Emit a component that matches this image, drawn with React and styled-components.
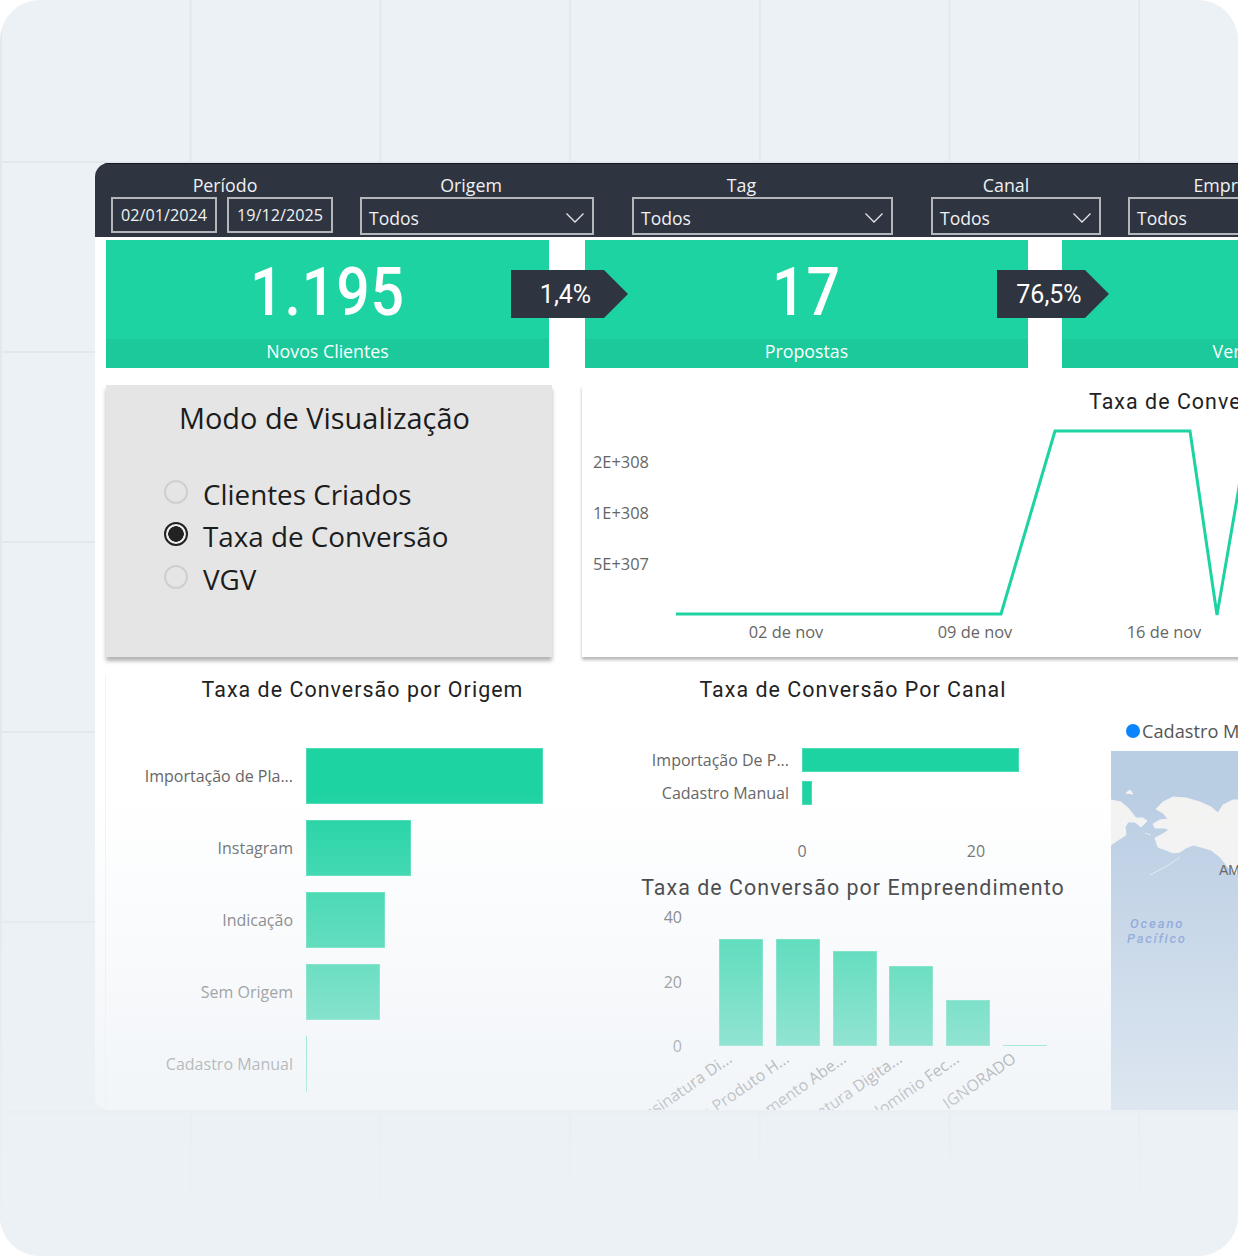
import React from "react";
import styled, { createGlobalStyle } from "styled-components";

const GlobalStyle = createGlobalStyle`
  html, body { margin: 0; padding: 0; background: #fff; }
  body { font-family: "Open Sans", "Liberation Sans", sans-serif; }
`;

const TEAL = "#1dd3a2";
const DIN = `Roboto, "Liberation Sans", sans-serif`;

const Frame = styled.div`
  position: relative;
  width: 1238px;
  height: 1256px;
  box-sizing: border-box;
  padding: 163px 0 0 95px;
  border-radius: 40px;
  overflow: hidden;
  background-color: #ecf1f6;
  background-image:
    linear-gradient(to right, #e3e8f0 2px, transparent 2px),
    linear-gradient(to bottom, #e3e8f0 2px, transparent 2px);
  background-size: 189.7px 190px;
  background-position: 0 -29px;
  &::after {
    content: "";
    position: absolute;
    inset: 0;
    pointer-events: none;
    background: linear-gradient(
      to bottom,
      rgba(236, 241, 246, 0) 790px,
      rgba(236, 241, 246, 0.7) 1110px,
      rgba(236, 241, 246, 0.97) 1256px
    );
  }
`;

const Dash = styled.div`
  width: 1500px;
  height: 947px;
  background: #fff;
  border-radius: 14px 0 0 14px;
  overflow: hidden;
`;

const FilterBar = styled.div`
  display: flex;
  height: 74px;
  box-sizing: border-box;
  padding: 10px 0 0 16px;
  background: #2f3441;
  border-top: 1px solid #14171f;
  color: #f0f1f2;
`;

const Filter = styled.div`
  display: flex;
  flex-direction: column;
  align-items: center;
  width: ${(p) => p.$w}px;
  margin-right: ${(p) => p.$mr}px;
`;

/* the labels sit a bit off the middle of their box, $shift is that offset */
const FilterLabel = styled.div`
  height: 23px;
  margin-left: ${(p) => (p.$shift || 0) * 2}px;
  font-size: 17.8px;
  line-height: 23px;
  white-space: nowrap;
`;

const DateRow = styled.div`
  display: flex;
  gap: 10px;
`;

const DateBox = styled.div`
  width: 106px;
  height: 36px;
  box-sizing: border-box;
  border: 2px solid #b4b6ba;
  font-size: 16.2px;
  line-height: 33px;
  text-align: center;
`;

const Select = styled.div`
  display: flex;
  align-items: center;
  justify-content: space-between;
  width: 100%;
  height: 38px;
  box-sizing: border-box;
  padding: 3px 7px 0 7px;
  border: 2px solid #b4b6ba;
  font-size: 17.6px;
`;

const KpiRow = styled.div`
  display: flex;
  margin: 3px 0 0 11px;
`;

const KpiCard = styled.div`
  position: relative;
  display: flex;
  flex-direction: column;
  flex: none;
  width: 443px;
  height: 128px;
  margin-right: ${(p) => p.$mr}px;
  background: ${TEAL};
  color: #fff;
`;

const KpiValue = styled.div`
  height: 99px;
  font-family: ${DIN};
  font-size: 67px;
  font-weight: 500;
  line-height: 104px;
  letter-spacing: 1px;
  text-align: center;
  transform: scaleX(0.88);
`;

const KpiCaption = styled.div`
  height: 29px;
  background: #1bc99b;
  font-size: 17.8px;
  line-height: 25px;
  text-align: center;
`;

const Arrow = styled.div`
  position: absolute;
  z-index: 1;
  top: 30px;
  left: ${(p) => p.$left}px;
  width: ${(p) => p.$w}px;
  height: 48px;
  box-sizing: border-box;
  padding-right: 8px;
  background: #2f3441;
  clip-path: polygon(0 0, calc(100% - 24px) 0, 100% 50%, calc(100% - 24px) 100%, 0 100%);
  font-family: ${DIN};
  font-size: 25px;
  line-height: 49px;
  text-align: center;
  color: #fff;
`;

const MiddleRow = styled.div`
  display: flex;
  gap: 30px;
  margin: 17px 0 0 11px;
`;

const ModePanel = styled.div`
  flex: none;
  width: 446px;
  height: 272px;
  box-sizing: border-box;
  padding: 13px 0 0 73px;
  background: #e5e5e5;
  box-shadow: 0 4px 4px rgba(0, 0, 0, 0.3);
  color: #1c1c1c;
`;

const ModeTitle = styled.div`
  font-size: 28.9px;
  line-height: 40px;
  margin-bottom: 35px;
  white-space: nowrap;
`;

const RadioList = styled.div`
  display: flex;
  flex-direction: column;
  margin-left: -15px;
`;

const RadioRow = styled.div`
  display: flex;
  align-items: center;
  gap: 15px;
  height: 42.3px;
  font-size: 27.8px;
`;

const Radio = styled.span`
  flex: none;
  width: 24px;
  height: 24px;
  margin-top: -4px;
  box-sizing: border-box;
  border-radius: 50%;
  border: 2px solid ${(p) => (p.$on ? "#222" : "#cfcfcf")};
  background: ${(p) => (p.$on ? "radial-gradient(circle, #222 0 7.5px, #eee 8px)" : "transparent")};
`;

const LinePanel = styled.div`
  flex: none;
  width: 700px;
  height: 272px;
  background: #fff;
  box-shadow: 0 3px 3px rgba(0, 0, 0, 0.28);
  svg { display: block; }
`;

const BottomRow = styled.div`
  display: grid;
  grid-template-columns: 514px 468px 1fr;
  margin: 18px 0 0 10px;
`;

const ChartTitle = styled.div`
  height: 30px;
  font-family: ${DIN};
  font-size: 21.4px;
  line-height: 30px;
  letter-spacing: 1.05px;
  text-align: center;
  color: #222;
  white-space: nowrap;
`;

const OriginChart = styled.div`
  border-left: 1px solid #f2f3f5;
`;

const HBars = styled.div`
  display: flex;
  flex-direction: column;
  gap: ${(p) => p.$gap}px;
  padding-top: ${(p) => p.$top}px;
`;

const HRow = styled.div`
  display: flex;
  align-items: center;
  gap: 13px;
  height: ${(p) => p.$h}px;
`;

const HLabel = styled.div`
  flex: none;
  width: ${(p) => p.$w}px;
  font-size: 16px;
  color: #666;
  text-align: right;
  white-space: nowrap;
`;

const HBar = styled.div`
  height: 100%;
  background: ${TEAL};
  box-shadow: inset 0 0 0 1px rgba(255, 255, 255, 0.2);
`;

const AxisRow = styled.div`
  display: flex;
  gap: 134px;
  margin: 34px 0 10px 163px;
`;

const AxisTick = styled.div`
  width: 40px;
  font-size: 16px;
  line-height: 24px;
  color: #666;
  text-align: center;
`;

const ColumnChart = styled.div`
  display: flex;
  height: 129px;
  margin-top: 14px;
`;

const YAxis = styled.div`
  display: flex;
  flex-direction: column;
  justify-content: space-between;
  width: 63px;
  height: 149px;
  margin-top: -10px;
  font-size: 16px;
  line-height: 20px;
  color: #666;
  text-align: right;
`;

const Columns = styled.div`
  display: flex;
  align-items: flex-end;
  gap: 12.8px;
  margin-left: 37px;
`;

const Column = styled.div`
  width: 44px;
`;

const ColumnBar = styled.div`
  height: ${(p) => p.$h}px;
  background: ${TEAL};
  box-shadow: inset 0 0 0 1px rgba(255, 255, 255, 0.2);
`;

const ColumnLabel = styled.div`
  display: flex;
  justify-content: flex-end;
  height: 0;
  padding-right: 39px;
  font-size: 16px;
  line-height: 20px;
  color: #666;
  white-space: nowrap;
  transform: translateY(2px) rotate(-35deg);
  transform-origin: 5px 0;
`;

const MapArea = styled.div`
  display: flex;
  flex-direction: column;
  margin-left: 24px;
`;

const Legend = styled.div`
  display: flex;
  align-items: center;
  gap: 2px;
  height: 76px;
  box-sizing: border-box;
  padding: 36px 0 0 15px;
  font-size: 18.2px;
  color: #555;
  white-space: nowrap;
`;

const LegendDot = styled.span`
  width: 14px;
  height: 14px;
  border-radius: 50%;
  background: #0a84ff;
`;

const MapBox = styled.div`
  flex: 1;
  height: 359px;
  background: #b9cde3;
  svg { display: block; }
`;

const Chevron = () => (
  <svg width="20" height="12" viewBox="0 0 20 12" fill="none">
    <path d="M1.5 1.5 L10 10 L18.5 1.5" stroke="#e4e5e7" strokeWidth="1.3" />
  </svg>
);

const LineChart = () => (
  <svg width="700" height="272" viewBox="0 0 700 272" fontFamily={`"Open Sans", sans-serif`} fontSize="16.4" fill="#666">
    <text x="507" y="24" fontFamily={DIN} fontSize="21.4" letterSpacing="1.05" fill="#222">Taxa de Conversão</text>
    <text x="11" y="83">2E+308</text>
    <text x="11" y="134">1E+308</text>
    <text x="11" y="185">5E+307</text>
    <text x="204" y="253" textAnchor="middle">02 de nov</text>
    <text x="393" y="253" textAnchor="middle">09 de nov</text>
    <text x="582" y="253" textAnchor="middle">16 de nov</text>
    <polyline
      points="94,229 419,229 473,46 608,46 635,230 660,85"
      fill="none"
      stroke={TEAL}
      strokeWidth="3"
    />
  </svg>
);

const LAND = "#f4f3f2";

const WorldMap = () => (
  <svg width="127" height="359" viewBox="0 0 127 359">
    <g fill={LAND} stroke={LAND} strokeWidth="1" strokeLinejoin="round">
      {/* Alaska */}
      <path d="M45 58 L52 51 L62 46 L75 47 L89 51 L100 56 L107 62 L112 54 L122 49 L127 49 L127 124 L117 116 L109 106 L100 99 L90 96 L82 94 L75 97 L69 101 L62 102 L55 99 L47 96 L44 87 L50 84 L58 79 L54 77 L44 77 L42 73 L49 69 L57 68 L52 62 Z" />
      {/* Chukotka */}
      <path d="M0 49 L10 51 L17 57 L25 67 L32 67 L36 70 L30 76 L24 71 L17 71 L14 76 L15 84 L7 89 L0 94 Z" />
      <path d="M15 42 L19 39 L22 43 Z" />
    </g>
    <g fill="none" stroke="#e4eaf1" strokeWidth="1">
      <path d="M69 106 L56 115 L39 124" />
      <path d="M34 82 L40 84" />
    </g>
    <text x="108" y="124" fontFamily={`"Liberation Sans", sans-serif`} fontSize="14" fill="#4a4a4a">AM</text>
    <text x="19" y="177" fontFamily={`Roboto, sans-serif`} fontStyle="italic" fontWeight="500" fontSize="13" letterSpacing="1.9" fill="#6f8ed0">Oceano</text>
    <text x="16" y="192" fontFamily={`Roboto, sans-serif`} fontStyle="italic" fontWeight="500" fontSize="13" letterSpacing="1.7" fill="#6f8ed0">Pacífico</text>
  </svg>
);

const origins = [
  { label: "Importação de Pla...", w: 237 },
  { label: "Instagram", w: 105 },
  { label: "Indicação", w: 79 },
  { label: "Sem Origem", w: 74 },
  { label: "Cadastro Manual", w: 1 },
];

const channels = [
  { label: "Importação De P...", w: 217 },
  { label: "Cadastro Manual", w: 10 },
];

const projects = [
  { label: "Assinatura Di...", h: 107 },
  { label: "Cadastro Produto H...", h: 107 },
  { label: "Lançamento Abe...", h: 95 },
  { label: "Assinatura Digita...", h: 80 },
  { label: "Condomínio Fec...", h: 46 },
  { label: "IGNORADO", h: 1 },
];

export default function App() {
  return (
    <Frame>
      <GlobalStyle />
      <Dash>
        <FilterBar>
          <Filter $w={222} $mr={27}>
            <FilterLabel $shift={3}>Período</FilterLabel>
            <DateRow>
              <DateBox>02/01/2024</DateBox>
              <DateBox>19/12/2025</DateBox>
            </DateRow>
          </Filter>
          <Filter $w={234} $mr={38}>
            <FilterLabel $shift={-6}>Origem</FilterLabel>
            <Select>Todos<Chevron /></Select>
          </Filter>
          <Filter $w={261} $mr={38}>
            <FilterLabel $shift={-21}>Tag</FilterLabel>
            <Select>Todos<Chevron /></Select>
          </Filter>
          <Filter $w={170} $mr={27}>
            <FilterLabel $shift={-10}>Canal</FilterLabel>
            <Select>Todos<Chevron /></Select>
          </Filter>
          <Filter $w={260} $mr={0}>
            <FilterLabel $shift={8}>Empreendimento</FilterLabel>
            <Select>Todos<Chevron /></Select>
          </Filter>
        </FilterBar>

        <KpiRow>
          <KpiCard $mr={36}>
            <KpiValue>1.195</KpiValue>
            <KpiCaption>Novos Clientes</KpiCaption>
            <Arrow $left={405} $w={117}>1,4%</Arrow>
          </KpiCard>
          <KpiCard $mr={34}>
            <KpiValue>17</KpiValue>
            <KpiCaption>Propostas</KpiCaption>
            <Arrow $left={412} $w={112}>76,5%</Arrow>
          </KpiCard>
          <KpiCard $mr={0}>
            <KpiValue>13</KpiValue>
            <KpiCaption>Vendas Firmadas</KpiCaption>
          </KpiCard>
        </KpiRow>

        <MiddleRow>
          <ModePanel>
            <ModeTitle>Modo de Visualização</ModeTitle>
            <RadioList>
              <RadioRow><Radio />Clientes Criados</RadioRow>
              <RadioRow><Radio $on />Taxa de Conversão</RadioRow>
              <RadioRow><Radio />VGV</RadioRow>
            </RadioList>
          </ModePanel>
          <LinePanel>
            <LineChart />
          </LinePanel>
        </MiddleRow>

        <BottomRow>
          <OriginChart>
            <ChartTitle>Taxa de Conversão por Origem</ChartTitle>
            <HBars $gap={16} $top={43}>
              {origins.map((o) => (
                <HRow key={o.label} $h={56}>
                  <HLabel $w={187}>{o.label}</HLabel>
                  <HBar style={{ width: o.w }} />
                </HRow>
              ))}
            </HBars>
          </OriginChart>

          <div>
            <ChartTitle>Taxa de Conversão Por Canal</ChartTitle>
            <HBars $gap={9} $top={43}>
              {channels.map((c) => (
                <HRow key={c.label} $h={24}>
                  <HLabel $w={170}>{c.label}</HLabel>
                  <HBar style={{ width: c.w }} />
                </HRow>
              ))}
            </HBars>
            <AxisRow>
              <AxisTick>0</AxisTick>
              <AxisTick>20</AxisTick>
            </AxisRow>
            <ChartTitle>Taxa de Conversão por Empreendimento</ChartTitle>
            <ColumnChart>
              <YAxis>
                <span>40</span>
                <span>20</span>
                <span>0</span>
              </YAxis>
              <Columns>
                {projects.map((p) => (
                  <Column key={p.label}>
                    <ColumnBar $h={p.h} />
                    <ColumnLabel>{p.label}</ColumnLabel>
                  </Column>
                ))}
              </Columns>
            </ColumnChart>
          </div>

          <MapArea>
            <Legend>
              <LegendDot />
              Cadastro Manual
            </Legend>
            <MapBox>
              <WorldMap />
            </MapBox>
          </MapArea>
        </BottomRow>
      </Dash>
    </Frame>
  );
}
